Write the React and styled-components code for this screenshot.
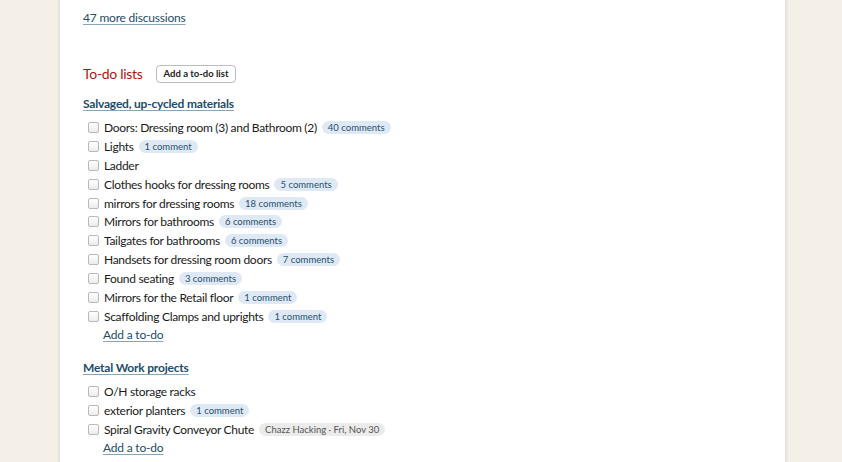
import React from 'react'
import styled, { createGlobalStyle } from 'styled-components'

const GlobalStyle = createGlobalStyle`
  html, body {
    margin: 0;
    padding: 0;
    background: #f4f0e8;
    font-family: Lato, "Open Sans", sans-serif;
    color: #1a1a1a;
  }
`

const Page = styled.div`
  height: 462px;
  overflow: hidden;
`

const Panel = styled.div`
  margin-left: 60px;
  width: 725px;
  min-height: 462px;
  background: #fff;
  box-shadow: 0 0 0 1px #e4e1da, 0 0 3px 1px rgba(0, 0, 0, 0.12);
  padding: 6px 23px 0;
  box-sizing: border-box;
`

const TextLink = styled.a`
  color: #1f4b66;
  font-size: 12px;
  letter-spacing: -0.2px;
  text-decoration: underline;
  text-decoration-color: #8aa4b6;
  text-underline-offset: 2px;
  cursor: pointer;
`

const MoreLink = styled(TextLink)`
  display: inline-block;
  line-height: 14px;
`

const Header = styled.div`
  display: flex;
  align-items: center;
  gap: 13px;
  margin-top: 40px;
`

const Title = styled.h2`
  margin: 0;
  font-size: 14px;
  font-weight: 400;
  letter-spacing: -0.3px;
  color: #b2140c;
  line-height: 18px;
`

const SmallButton = styled.button`
  font-family: inherit;
  font-size: 9.5px;
  font-weight: 700;
  color: #222;
  background: #fff;
  border: 1px solid #bcbcbc;
  border-radius: 4px;
  padding: 0 7px;
  height: 18px;
  line-height: 16px;
`

const List = styled.div`
  margin-top: ${p => p.$top}px;
`

const ListTitle = styled(TextLink)`
  display: block;
  font-weight: 700;
  font-size: 12px;
  line-height: 14px;
  margin-bottom: 7px;
`

const Row = styled.label`
  display: flex;
  align-items: center;
  height: 18.9px;
  padding-left: 5px;
  font-size: 12px;
  letter-spacing: -0.3px;
`

const Box = styled.span`
  width: 9px;
  height: 9px;
  border: 1px solid #b9b9b9;
  border-radius: 2px;
  background: linear-gradient(#fff, #ececec);
  margin-right: 5px;
  flex: none;
`

const Badge = styled.span`
  margin-left: 5px;
  font-size: 9.5px;
  letter-spacing: 0;
  line-height: 13px;
  padding: 0 6px;
  border-radius: 7px;
  background: ${p => (p.$gray ? '#ebebeb' : '#dfe9f6')};
  color: ${p => (p.$gray ? '#555' : '#28506b')};
`

const AddRow = styled.div`
  padding-left: 20px;
  height: 18px;
  display: flex;
  align-items: center;
`

const lists = [
  {
    title: 'Salvaged, up-cycled materials',
    top: 14,
    items: [
      ['Doors: Dressing room (3) and Bathroom (2)', '40 comments'],
      ['Lights', '1 comment'],
      ['Ladder'],
      ['Clothes hooks for dressing rooms', '5 comments'],
      ['mirrors for dressing rooms', '18 comments'],
      ['Mirrors for bathrooms', '6 comments'],
      ['Tailgates for bathrooms', '6 comments'],
      ['Handsets for dressing room doors', '7 comments'],
      ['Found seating', '3 comments'],
      ['Mirrors for the Retail floor', '1 comment'],
      ['Scaffolding Clamps and uprights', '1 comment'],
    ],
  },
  {
    title: 'Metal Work projects',
    top: 17,
    items: [
      ['O/H storage racks'],
      ['exterior planters', '1 comment'],
      ['Spiral Gravity Conveyor Chute', 'Chazz Hacking · Fri, Nov 30', true],
    ],
  },
]

const App = () => (
  <Page>
    <GlobalStyle />
    <Panel>
      <MoreLink>47 more discussions</MoreLink>
      <Header>
        <Title>To-do lists</Title>
        <SmallButton>Add a to-do list</SmallButton>
      </Header>
      {lists.map(list => (
        <List key={list.title} $top={list.top}>
          <ListTitle>{list.title}</ListTitle>
          {list.items.map(([text, badge, gray]) => (
            <Row key={text}>
              <Box />
              {text}
              {badge && <Badge $gray={gray}>{badge}</Badge>}
            </Row>
          ))}
          <AddRow>
            <TextLink>Add a to-do</TextLink>
          </AddRow>
        </List>
      ))}
    </Panel>
  </Page>
)

export default App
